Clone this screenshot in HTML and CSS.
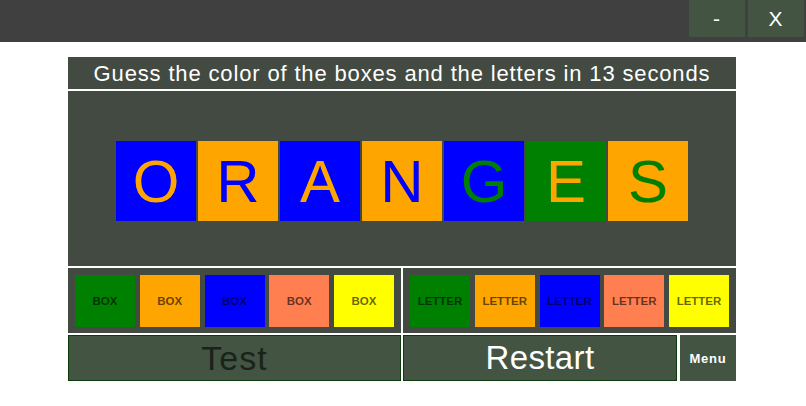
FILE: index.html
```html
<!DOCTYPE html>
<html>
<head>
<meta charset="utf-8">
<link rel="stylesheet" href="styles.css">
</head>
<body>
<div class="topbar">
  <button class="winbtn">-</button>
  <button class="winbtn">X</button>
</div>
<div class="game">
  <div class="title">Guess the color of the boxes and the letters in 13 seconds</div>
  <div class="word">
    <div class="tile bg-blue fg-orange">O</div>
    <div class="tile bg-orange fg-blue">R</div>
    <div class="tile bg-blue fg-orange">A</div>
    <div class="tile bg-orange fg-blue">N</div>
    <div class="tile bg-blue fg-green">G</div>
    <div class="tile bg-green fg-orange">E</div>
    <div class="tile bg-orange fg-green">S</div>
  </div>
  <div class="options">
    <div class="group">
      <div class="opt bg-green">BOX</div>
      <div class="opt bg-orange">BOX</div>
      <div class="opt bg-blue">BOX</div>
      <div class="opt bg-coral">BOX</div>
      <div class="opt bg-yellow">BOX</div>
    </div>
    <div class="group">
      <div class="opt bg-green">LETTER</div>
      <div class="opt bg-orange">LETTER</div>
      <div class="opt bg-blue">LETTER</div>
      <div class="opt bg-coral">LETTER</div>
      <div class="opt bg-yellow">LETTER</div>
    </div>
  </div>
  <div class="actions">
    <div class="btn test">Test</div>
    <div class="btn restart">Restart</div>
    <div class="btn menu">Menu</div>
  </div>
</div>
</body>
</html>
```
FILE: styles.css
```css
html, body {
  margin: 0;
  padding: 0;
  background: #ffffff;
  font-family: "Liberation Sans", Arial, sans-serif;
}
.topbar {
  height: 42px;
  background: #404040;
  display: flex;
  justify-content: flex-end;
  align-items: flex-start;
  gap: 3px;
  padding-right: 2px;
}
.winbtn {
  width: 56px;
  height: 37px;
  border: none;
  margin: 0;
  padding: 0;
  background: #435443;
  color: #ffffff;
  font-family: "Liberation Sans", Arial, sans-serif;
  font-size: 21px;
  letter-spacing: 1px;
}
.game {
  width: 668px;
  margin: 15px 0 0 68px;
  display: flex;
  flex-direction: column;
  gap: 2px;
}
.title {
  height: 32px;
  background: #424a42;
  color: #ffffff;
  font-size: 22px;
  letter-spacing: 0.85px;
  line-height: 33px;
  text-align: center;
}
.word {
  height: 175px;
  background: #424a42;
  display: flex;
  justify-content: center;
  align-items: center;
  gap: 2px;
  padding-top: 5px;
  box-sizing: border-box;
}
.tile {
  width: 80px;
  height: 80px;
  display: flex;
  align-items: center;
  justify-content: center;
  font-size: 60px;
}
.bg-blue { background: #0000ff; }
.bg-orange { background: #ffa500; }
.bg-green { background: #008000; }
.bg-coral { background: #ff7f50; }
.bg-yellow { background: #ffff00; }
.fg-blue { color: #0000ff; }
.fg-orange { color: #ffa500; }
.fg-green { color: #008000; }
.options {
  display: flex;
  gap: 2px;
  height: 65px;
}
.group {
  flex: 1;
  background: #424a42;
  display: flex;
  justify-content: space-between;
  padding: 7px 7px 6px 7px;
  box-sizing: border-box;
}
.opt {
  width: 60px;
  height: 52px;
  display: flex;
  align-items: center;
  justify-content: center;
  font-size: 11.5px;
  font-weight: bold;
  color: rgba(0, 0, 0, 0.62);
}
.actions {
  display: flex;
  height: 46px;
}
.btn {
  background: #435443;
  box-sizing: border-box;
  display: flex;
  align-items: center;
  justify-content: center;
}
.test {
  width: 333px;
  border: 1px solid #0b3a0b;
  color: #1a231a;
  font-size: 34px;
  letter-spacing: 1px;
}
.restart {
  width: 274px;
  margin-left: 2px;
  border: 1px solid #0b3a0b;
  color: #ffffff;
  font-size: 33px;
  letter-spacing: 0.4px;
}
.menu {
  width: 56px;
  margin-left: 3px;
  color: #ffffff;
  font-size: 13px;
  font-weight: bold;
  letter-spacing: 0.8px;
}
```
